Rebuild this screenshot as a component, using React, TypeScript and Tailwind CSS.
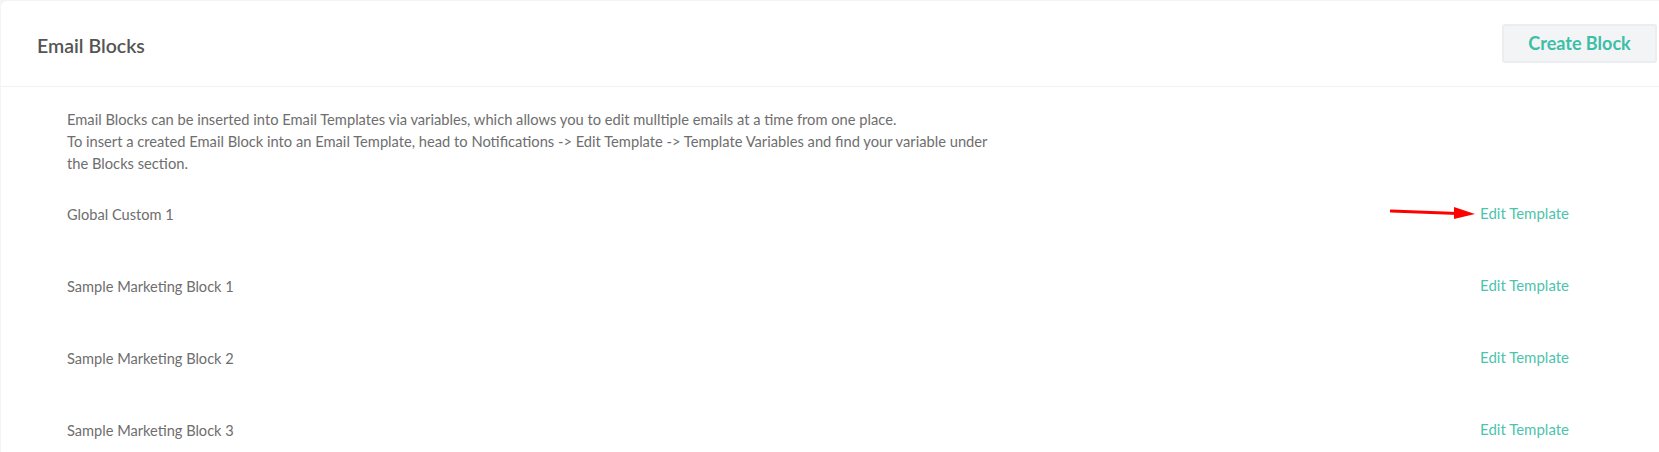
const blocks = [
  "Global Custom 1",
  "Sample Marketing Block 1",
  "Sample Marketing Block 2",
  "Sample Marketing Block 3",
];

export default function App() {
  return (
    <div className="min-h-screen bg-[#f3f4f6] pt-px pl-px font-['Lato','Open_Sans',sans-serif]">
      <div className="bg-white rounded-tl-md">
        {/* Header */}
        <div className="h-[86px] flex items-center justify-between pl-9 pr-[2px] border-b border-[#f1f1f1]">
          <h2 className="pt-[5px] text-[19.5px] font-semibold text-[#555555]">Email Blocks</h2>
          <button className="w-[155px] h-[39px] rounded-[3px] border-2 border-[#ebedf0] bg-[#f3f4f6] text-[18px] font-bold text-[#3cbfa6]">
            Create Block
          </button>
        </div>

        {/* Body */}
        <div className="pl-[66px] pr-[90px] pt-[21px]">
          <p className="text-[14.7px] leading-[22px] text-[#6e6e6e] mb-[5px]">
            Email Blocks can be inserted into Email Templates via variables, which allows you to edit mulltiple emails at a time from one place.
            <br />
            To insert a created Email Block into an Email Template, head to Notifications -&gt; Edit Template -&gt; Template Variables and find your variable under
            <br />
            the Blocks section.
          </p>

          {blocks.map((name, i) => (
            <div key={name} className="h-[72px] flex items-center justify-between">
              <span className="text-[14.6px] text-[#6e6e6e]">{name}</span>
              <div className="relative mb-[4px]">
                {i === 0 && (
                  <svg
                    className="absolute right-full top-1/2 -translate-y-1/2 mr-[4px]"
                    width="86"
                    height="14"
                    viewBox="0 0 86 14"
                  >
                    <line x1="1" y1="5" x2="68" y2="7.5" stroke="#ff0000" strokeWidth="3" strokeLinecap="round" />
                    <polygon points="64,1 85,8 64,13" fill="#ff0000" />
                  </svg>
                )}
                <a href="#" className="text-[15px] text-[#4cc4ae]">
                  Edit Template
                </a>
              </div>
            </div>
          ))}
        </div>
      </div>
    </div>
  );
}
